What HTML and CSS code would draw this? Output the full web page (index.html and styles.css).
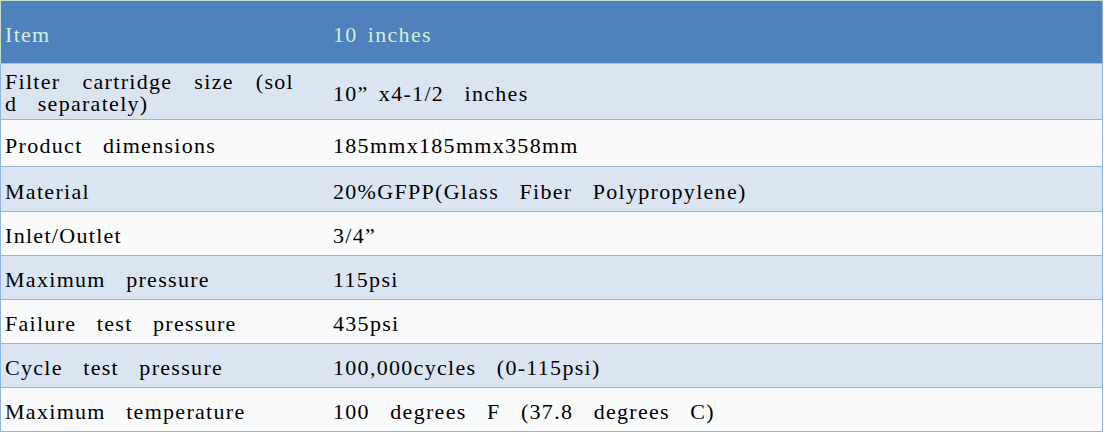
FILE: index.html
```html
<!DOCTYPE html>
<html>
<head>
<meta charset="utf-8">
<link rel="stylesheet" href="styles.css">
</head>
<body>
<div class="spec">
  <div class="row head">
    <div class="c1">Item</div>
    <div class="c2">10 inches</div>
  </div>
  <div class="row alt r-two">
    <div class="c1 wrap">Filter  cartridge  size  (sold  separately)</div>
    <div class="c2">10” x4-1/2  inches</div>
  </div>
  <div class="row r-47">
    <div class="c1">Product  dimensions</div>
    <div class="c2">185mmx185mmx358mm</div>
  </div>
  <div class="row alt r-45">
    <div class="c1">Material</div>
    <div class="c2">20%GFPP(Glass  Fiber  Polypropylene)</div>
  </div>
  <div class="row">
    <div class="c1">Inlet/Outlet</div>
    <div class="c2">3/4”</div>
  </div>
  <div class="row alt">
    <div class="c1">Maximum  pressure</div>
    <div class="c2">115psi</div>
  </div>
  <div class="row">
    <div class="c1">Failure  test  pressure</div>
    <div class="c2">435psi</div>
  </div>
  <div class="row alt">
    <div class="c1">Cycle  test  pressure</div>
    <div class="c2">100,000cycles  (0-115psi)</div>
  </div>
  <div class="row">
    <div class="c1">Maximum  temperature</div>
    <div class="c2">100  degrees  F  (37.8  degrees  C)</div>
  </div>
</div>
</body>
</html>
```
FILE: styles.css
```css
html, body {
  margin: 0;
  padding: 0;
  background: #ffffff;
}

.spec {
  width: 1104px;
  font-family: "Liberation Serif", serif;
  font-size: 22px;
  letter-spacing: 1.3px;
  word-spacing: 3.4px;
  line-height: 22px;
  color: #000000;
}

.row {
  display: flex;
  align-items: center;
  box-sizing: border-box;
  width: 1103px;
  height: 44px;
  border-left: 1px solid #95b3d7;
  border-right: 1px solid #95b3d7;
  border-bottom: 1px solid #95b3d7;
  background: #f8fafb;
  white-space: pre-wrap;
}

.row.alt {
  background: #dbe5f1;
}

.row.head {
  height: 64px;
  background: #4f81bd;
  color: #d4eedb;
  border-top: 1px solid #c2dfc6;
  border-left-color: #c2dfc6;
  border-bottom-color: #a7bfe0;
}

.row.r-two {
  height: 56px;
}

.row.r-47 {
  height: 47px;
}

.row.r-45 {
  height: 45px;
}

.c1 {
  box-sizing: border-box;
  width: 327px;
  flex: none;
  padding: 5px 2px 0 4px;
}

.c2 {
  flex: 1;
  padding: 5px 0 0 5px;
}

.c1.wrap {
  word-break: break-all;
  text-align: justify;
  padding-top: 2px;
  padding-right: 34px;
}
```
